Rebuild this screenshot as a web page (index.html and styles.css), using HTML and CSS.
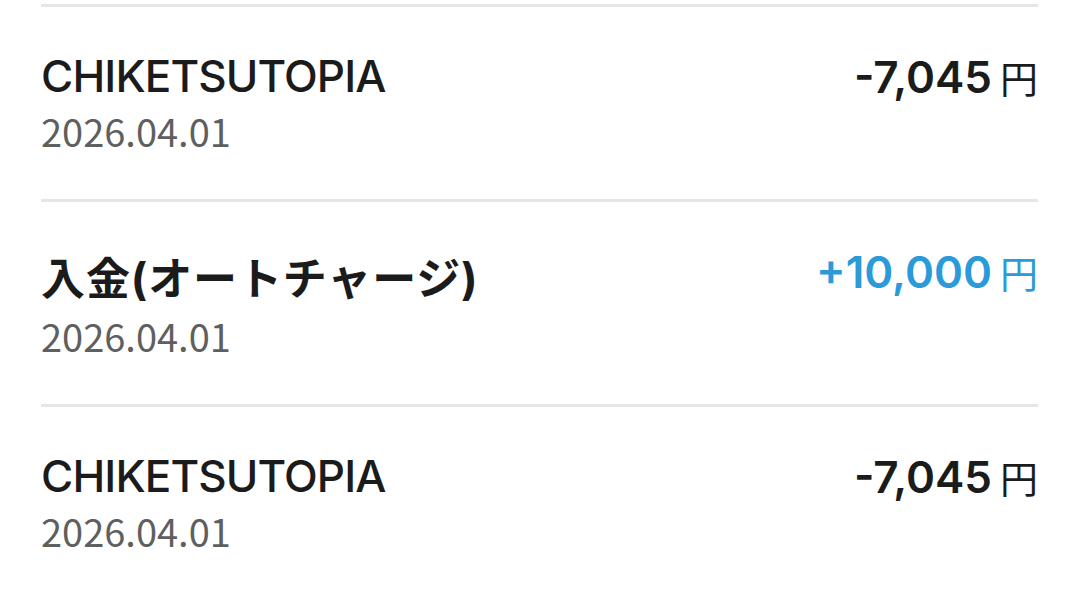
FILE: index.html
```html
<!DOCTYPE html>
<html lang="ja">
<head>
<meta charset="utf-8">
<link rel="stylesheet" href="styles.css">
<title>履歴</title>
</head>
<body>
<ul class="list">
  <li class="row">
    <div class="info">
      <div class="title">CHIKETSUTOPIA</div>
      <div class="date">2026.04.01</div>
    </div>
    <div class="amount"><span class="num">-7,045</span><span class="yen">円</span></div>
  </li>
  <li class="row">
    <div class="info">
      <div class="title title-ja">入金(オートチャージ)</div>
      <div class="date">2026.04.01</div>
    </div>
    <div class="amount plus"><span class="num">+10,000</span><span class="yen">円</span></div>
  </li>
  <li class="row">
    <div class="info">
      <div class="title">CHIKETSUTOPIA</div>
      <div class="date">2026.04.01</div>
    </div>
    <div class="amount"><span class="num">-7,045</span><span class="yen">円</span></div>
  </li>
</ul>
</body>
</html>
```
FILE: styles.css
```css
html, body {
  margin: 0;
  padding: 0;
  background: #ffffff;
}
body {
  overflow: hidden;
}
.list {
  list-style: none;
  margin: 0;
  padding: 4px 42px 0 41px;
}
.row {
  display: flex;
  justify-content: space-between;
  align-items: flex-start;
  border-top: 3px solid #e6e6e6;
  padding: 42px 0 41px;
}
.title {
  font-family: "Inter", "Noto Sans CJK JP", sans-serif;
  font-weight: 500;
  font-size: 44px;
  letter-spacing: -0.02em;
  color: #1b1b1b;
  line-height: normal;
}
.title-ja {
  font-weight: 700;
  letter-spacing: 0.02em;
}
.date {
  font-family: "Noto Sans CJK JP", sans-serif;
  font-weight: 400;
  font-size: 38px;
  color: #5f5f5f;
  line-height: normal;
}
.amount {
  font-family: "Inter", "Noto Sans CJK JP", sans-serif;
  color: #1b1b1b;
  line-height: normal;
  white-space: nowrap;
}
.num {
  font-weight: 600;
  font-size: 44px;
}
.yen {
  font-family: "Noto Sans CJK JP", sans-serif;
  font-weight: 400;
  font-size: 38px;
  margin-left: 8px;
}
.plus {
  color: #2b9ad9;
}
```
